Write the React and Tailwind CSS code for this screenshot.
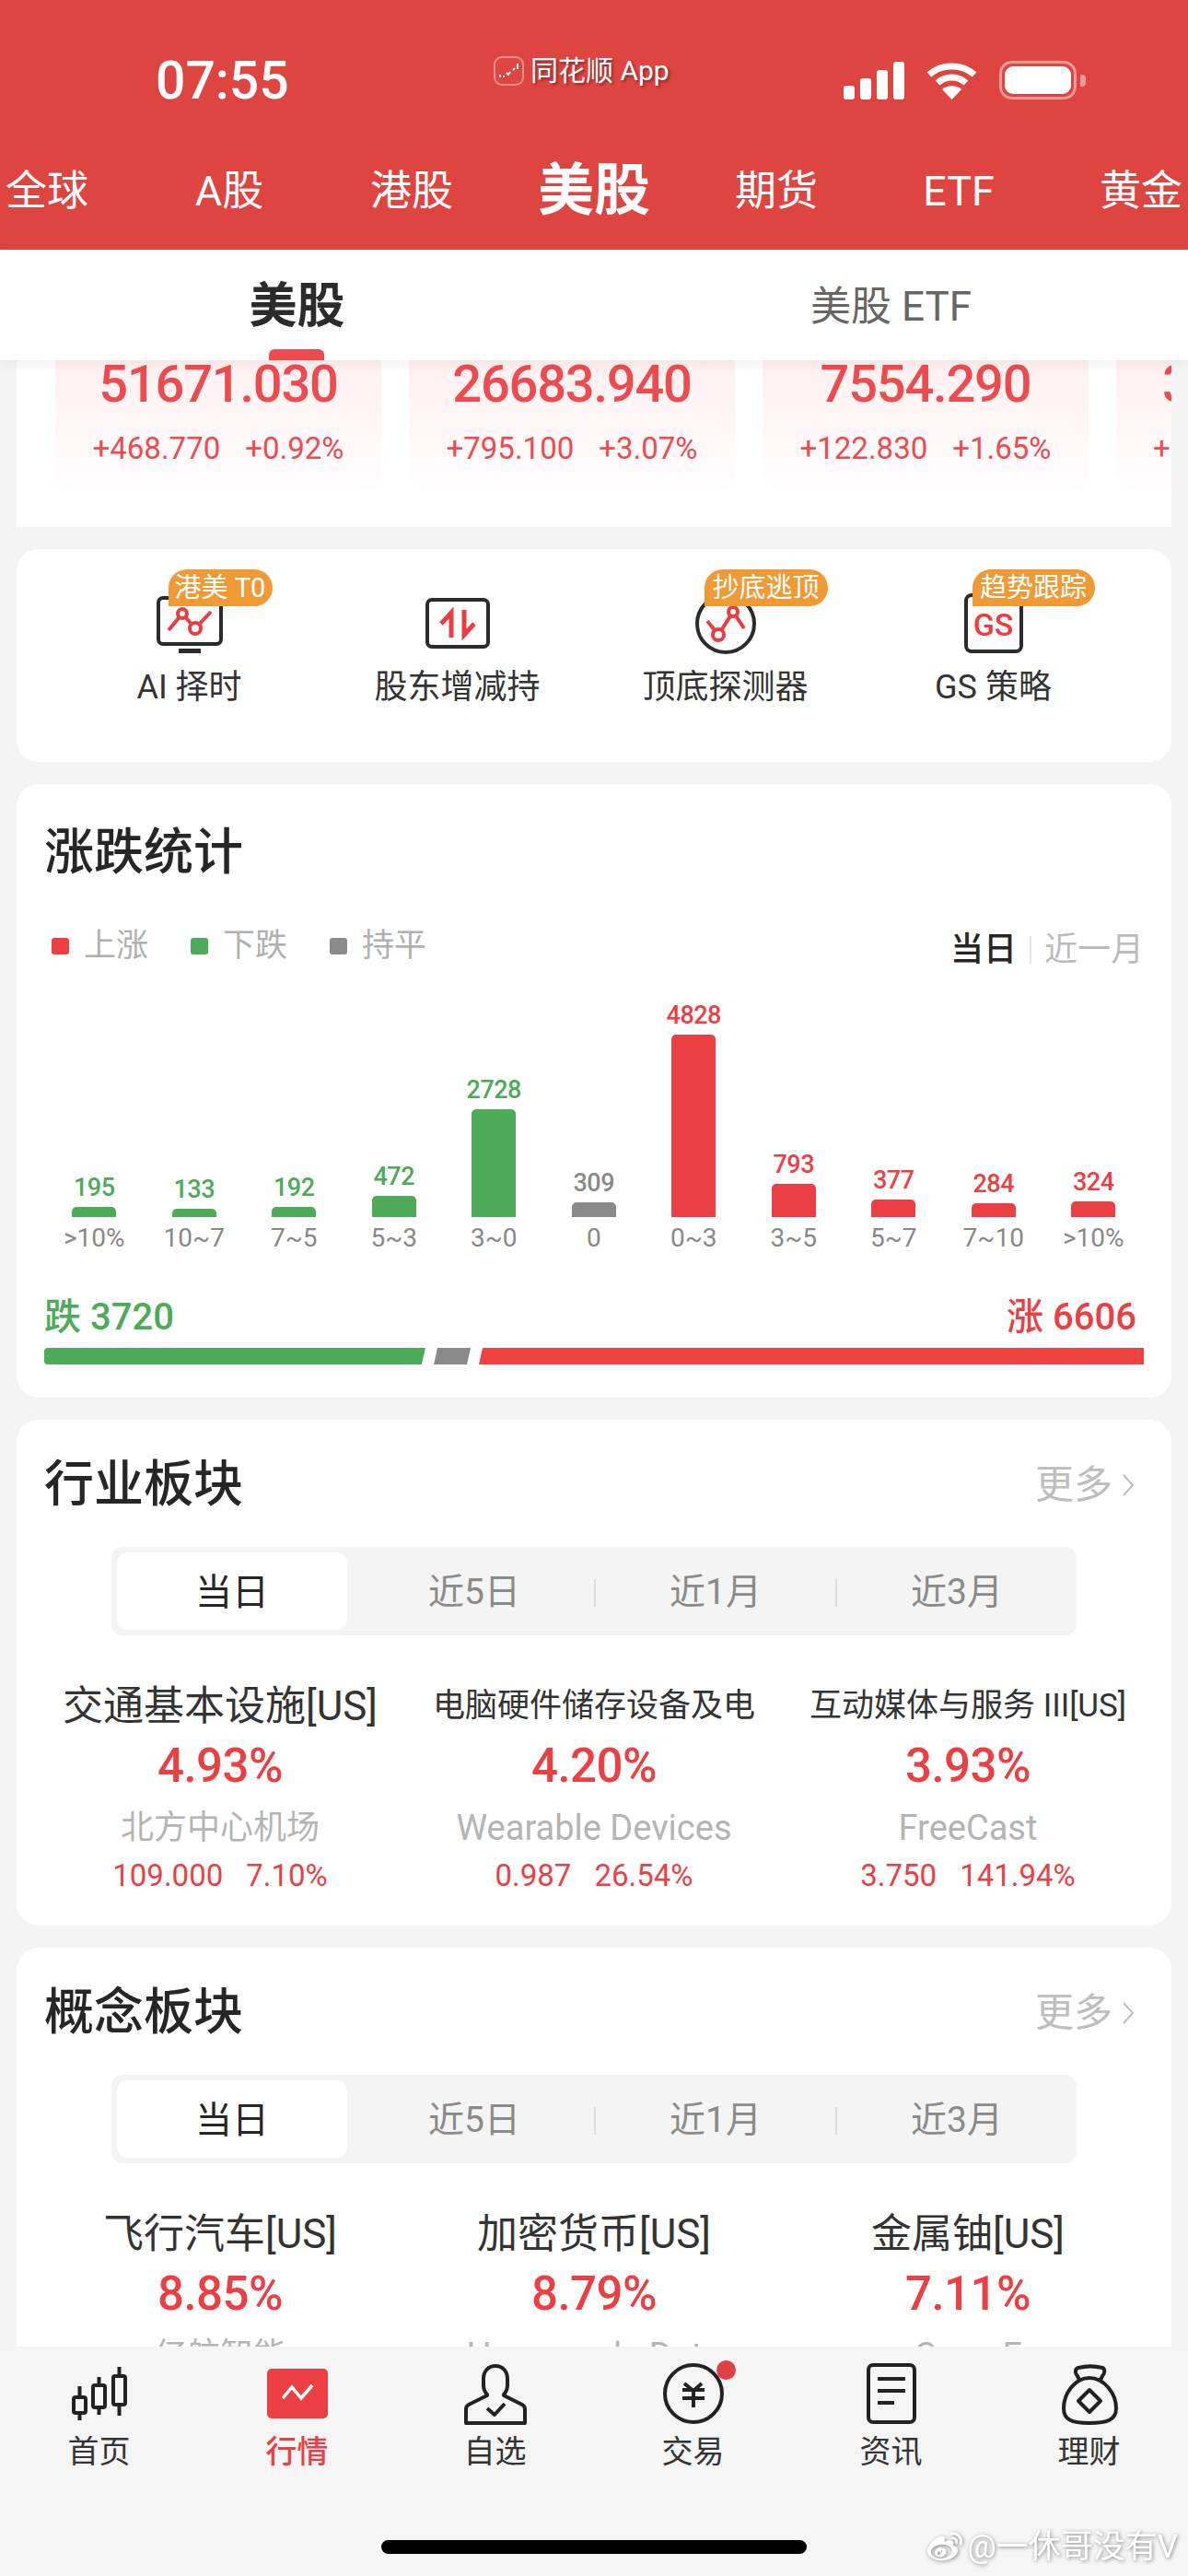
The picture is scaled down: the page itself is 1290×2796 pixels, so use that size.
import { FaWeibo } from 'react-icons/fa';

const navTabs = ['全球', 'A股', '港股', '美股', '期货', 'ETF', '黄金'];

const quotes = [
  { value: '51671.030', change: '+468.770', pct: '+0.92%' },
  { value: '26683.940', change: '+795.100', pct: '+3.07%' },
  { value: '7554.290', change: '+122.830', pct: '+1.65%' },
];

const bars = [
  { value: 195, label: '>10%', height: 11, tone: 'green' },
  { value: 133, label: '10~7', height: 9, tone: 'green' },
  { value: 192, label: '7~5', height: 11, tone: 'green' },
  { value: 472, label: '5~3', height: 23, tone: 'green' },
  { value: 2728, label: '3~0', height: 117, tone: 'green' },
  { value: 309, label: '0', height: 16, tone: 'gray' },
  { value: 4828, label: '0~3', height: 198, tone: 'red' },
  { value: 793, label: '3~5', height: 36, tone: 'red' },
  { value: 377, label: '5~7', height: 19, tone: 'red' },
  { value: 284, label: '7~10', height: 15, tone: 'red' },
  { value: 324, label: '>10%', height: 17, tone: 'red' },
];

const toneBg = { green: 'bg-[#4caa58]', gray: 'bg-[#8a8a8a]', red: 'bg-[#ec3f44]' };
const toneText = { green: 'text-[#4caa58]', gray: 'text-[#8a8a8a]', red: 'text-[#ec3f44]' };

const industry = [
  { name: '交通基本设施[US]', big: true, pct: '4.93%', stock: '北方中心机场', price: '109.000', change: '7.10%' },
  { name: '电脑硬件储存设备及电', pct: '4.20%', stock: 'Wearable Devices', latin: true, price: '0.987', change: '26.54%' },
  { name: '互动媒体与服务 III[US]', pct: '3.93%', stock: 'FreeCast', latin: true, price: '3.750', change: '141.94%' },
];

const concept = [
  { name: '飞行汽车[US]', big: true, pct: '8.85%', stock: '亿航智能' },
  { name: '加密货币[US]', big: true, pct: '8.79%', stock: 'Hyperscale Data', latin: true },
  { name: '金属铀[US]', big: true, pct: '7.11%', stock: 'Cosa F', latin: true },
];

const RED = '#ea3d43';
const INK = '#2b2b2b';

const StatusBar = () => (
  <div className="flex items-center h-[54px] mt-[60px] text-white">
    <span className="ml-[169px] w-[147px] text-[57px] leading-none font-medium">07:55</span>
    <div className="ml-[220px] flex items-center gap-[7px] -mt-[20px]">
      <span className="flex items-center justify-center w-[33px] h-[32px] rounded-[9px] border-2 border-white/40">
        <svg viewBox="0 0 24 24" className="w-[24px] h-[24px]" fill="none" stroke="#fff" strokeWidth="2">
          <path d="M2 19v-3M6 19v-2M9 14l2 2 2-3M16 11l2-2M21 10V4" />
        </svg>
      </span>
      <span className="w-[152px] text-[30px] leading-none whitespace-nowrap [text-shadow:2px_2px_3px_rgba(0,0,0,0.4)]">同花顺 App</span>
    </div>
    <div className="ml-[188px] flex items-end gap-[6px] h-[41px]">
      <span className="w-[12px] h-[15px] rounded-[3px] bg-white" />
      <span className="w-[12px] h-[23px] rounded-[3px] bg-white" />
      <span className="w-[12px] h-[32px] rounded-[3px] bg-white" />
      <span className="w-[12px] h-[41px] rounded-[3px] bg-white" />
    </div>
    <svg viewBox="0 0 57 41" className="ml-[23px] w-[57px] h-[41px]" fill="none" stroke="#fff" strokeWidth="7">
      <path d="M4 14C17 2 40 2 53 14" />
      <path d="M13 23C22 15 35 15 44 23" />
      <path d="M28.5 41L18 30C24 25 33 25 39 30Z" fill="#fff" stroke="none" />
    </svg>
    <div className="ml-[23px] flex items-center gap-[4px]">
      <div className="w-[84px] h-[42px] rounded-[14px] border-[3px] border-white/45 p-[3px]">
        <div className="w-full h-full rounded-[9px] bg-white" />
      </div>
      <span className="w-[6px] h-[13px] rounded-r-[4px] bg-white/45" />
    </div>
  </div>
);

const NavTabs = () => (
  <div className="flex justify-center items-center h-[100px] mt-[43px] text-white">
    {navTabs.map((tab) => (
      <span
        key={tab}
        className={`shrink-0 w-[198px] text-center whitespace-nowrap leading-none ${
          tab === '美股' ? 'text-[61px] font-bold' : 'text-[45px]'
        }`}
      >
        {tab}
      </span>
    ))}
  </div>
);

const QuoteCard = ({ quote }) => (
  <div className="shrink-0 w-[354px] h-[144px] pt-[2px] rounded-b-[24px] bg-linear-to-b from-[#fff0f0] to-[#fffdfe] flex flex-col items-center text-[#ee4b50]">
    <span className="text-[56px] leading-[48px] font-medium tracking-[-1.2px]">{quote.value}</span>
    <div className="flex gap-[27px] mt-[26px] text-[33px] leading-[40px]">
      <span>{quote.change}</span>
      <span>{quote.pct}</span>
    </div>
  </div>
);

const MonitorIcon = () => (
  <svg viewBox="0 0 80 72" className="w-[80px] h-[72px]" fill="none" strokeWidth="4">
    <rect x="6" y="8" width="68" height="50" rx="5" stroke={INK} />
    <rect x="28" y="63" width="24" height="5" fill={INK} />
    <polyline points="17,43 32,25 46,41 63,23" stroke={RED} />
    <circle cx="32" cy="25" r="5" stroke={RED} fill="#fff" />
    <circle cx="46" cy="41" r="6" stroke={RED} fill="#fff" />
  </svg>
);

const HolderIcon = () => (
  <svg viewBox="0 0 80 72" className="w-[80px] h-[72px]" fill="none" strokeWidth="4">
    <rect x="7" y="10" width="66" height="51" rx="5" stroke={INK} />
    <polyline points="22,36 33,24 33,51" stroke={RED} strokeWidth="5" />
    <polyline points="47,21 47,48 58,36" stroke={RED} strokeWidth="5" />
  </svg>
);

const DetectorIcon = () => (
  <svg viewBox="0 0 80 72" className="w-[80px] h-[72px]" fill="none" strokeWidth="4">
    <circle cx="40" cy="36" r="31" stroke={INK} />
    <polyline points="20,33 32,48 48,23 60,41" stroke={RED} />
    <circle cx="32" cy="48" r="6" stroke={RED} fill="#fff" />
    <circle cx="48" cy="23" r="5" stroke={RED} fill="#fff" />
  </svg>
);

const StrategyIcon = () => (
  <div className="relative w-[80px] h-[72px]">
    <svg viewBox="0 0 80 72" className="w-[80px] h-[72px]" fill="none" strokeWidth="4">
      <rect x="10" y="5" width="60" height="61" rx="6" stroke={INK} />
    </svg>
    <span className="absolute left-0 right-0 top-[13px] text-center text-[34px] leading-[48px] font-medium text-[#ea3d43]">GS</span>
  </div>
);

const tools = [
  { label: 'AI 择时', badge: '港美 T0', badgeWidth: 'w-[113px]', Icon: MonitorIcon },
  { label: '股东增减持', Icon: HolderIcon },
  { label: '顶底探测器', badge: '抄底逃顶', badgeWidth: 'w-[134px]', Icon: DetectorIcon },
  { label: 'GS 策略', badge: '趋势跟踪', badgeWidth: 'w-[133px]', Icon: StrategyIcon },
];

const ToolGrid = () => (
  <div className="mx-[18px] h-[231px] shrink-0 rounded-[24px] bg-white pt-[45px] pl-[42px] flex">
    {tools.map(({ label, badge, badgeWidth, Icon }) => (
      <div key={label} className="w-[291px] flex flex-col items-center">
        <div className="relative w-[80px] h-[72px]">
          <Icon />
          {badge && (
            <span
              className={`absolute left-[17px] -top-[23px] h-[40px] ${badgeWidth} rounded-t-[20px] rounded-br-[20px] bg-[#f09a36] text-white text-[29px] leading-[40px] text-center whitespace-nowrap`}
            >
              {badge}
            </span>
          )}
        </div>
        <span className="mt-[13px] text-[36px] leading-[40px] text-[#333]">{label}</span>
      </div>
    ))}
  </div>
);

const Legend = ({ tone, children }) => (
  <div className="flex items-center gap-[16px]">
    <span className={`w-[19px] h-[18px] rounded-[3px] ${toneBg[tone]}`} />
    <span className="text-[35px] leading-[40px] text-[#b0b0b0]">{children}</span>
  </div>
);

const StatsCard = () => (
  <div className="mx-[18px] shrink-0 rounded-[24px] bg-white px-[30px] pt-[45px] pb-[36px]">
    <h2 className="text-[54px] leading-[60px] font-medium text-[#262626]">涨跌统计</h2>
    <div className="flex items-center justify-between mt-[51px] pl-[8px] h-[40px]">
      <div className="flex items-center gap-[46px]">
        <Legend tone="red">上涨</Legend>
        <Legend tone="green">下跌</Legend>
        <Legend tone="gray">持平</Legend>
      </div>
      <div className="flex items-center mt-[8px] text-[36px] leading-[40px]">
        <span className="font-medium text-[#262626]">当日</span>
        <span className="w-[2px] h-[30px] mx-[14px] bg-[#e4e4e4]" />
        <span className="text-[#bbb]">近一月</span>
      </div>
    </div>
    <div className="grid grid-cols-[repeat(11,108.5px)] h-[276px] mt-[38px]">
      {bars.map((bar, index) => (
        <div key={index} className="flex flex-col items-center justify-end">
          <span className={`text-[27px] leading-[30px] mb-[6px] font-medium tracking-[-0.5px] ${toneText[bar.tone]}`}>{bar.value}</span>
          <div className={`w-[48px] rounded-t-[5px] ${toneBg[bar.tone]}`} style={{ height: bar.height }} />
          <span className="mt-[6px] text-[28px] leading-[34px] text-[#888]">{bar.label}</span>
        </div>
      ))}
    </div>
    <div className="flex justify-between items-center mt-[47px] h-[44px] text-[40px] font-medium">
      <span className="text-[#4caa58]">跌 3720</span>
      <span className="text-[#ec3f44] mr-[8px]">涨 6606</span>
    </div>
    <div className="flex gap-[9px] h-[18px] mt-[11px]">
      <div className="w-[414px] rounded-l-[4px] bg-[#4caa58] [clip-path:polygon(0_0,100%_0,99%_100%,0_100%)]" />
      <div className="w-[40px] bg-[#8a8a8a] [clip-path:polygon(10%_0,100%_0,90%_100%,0_100%)]" />
      <div className="w-[722px] bg-[#ec4340] [clip-path:polygon(4px_0,100%_0,100%_100%,0_100%)]" />
    </div>
  </div>
);

const SectorCard = ({ title, items }) => (
  <div className="mx-[18px] shrink-0 rounded-[24px] bg-white pt-[41px] pb-[34px]">
    <div className="flex items-center justify-between pl-[30px] pr-[40px]">
      <h2 className="text-[54px] leading-[60px] font-medium text-[#262626]">{title}</h2>
      <div className="flex items-center gap-[10px] text-[#bdbdbd]">
        <span className="text-[42px] leading-[44px]">更多</span>
        <svg viewBox="0 0 14 26" className="w-[14px] h-[26px]" fill="none" stroke="#bdbdbd" strokeWidth="2">
          <polyline points="2,2 12,13 2,24" />
        </svg>
      </div>
    </div>
    <div className="flex items-center h-[96px] mt-[37px] mx-[103px] pl-[6px] py-[6px] rounded-[12px] bg-[#f4f4f4] text-[39px] text-[#8a8a8a]">
      <div className="w-[250px] h-full pt-[3px] rounded-[12px] bg-white flex items-center justify-center text-[40px] text-[#262626]">当日</div>
      <div className="flex-1 ml-[8px] pt-[3px] flex items-center">
        <span className="flex-1 text-center">近5日</span>
        <span className="w-[2px] h-[30px] bg-[#dedede]" />
        <span className="flex-1 text-center">近1月</span>
        <span className="w-[2px] h-[30px] bg-[#dedede]" />
        <span className="flex-1 text-center">近3月</span>
      </div>
    </div>
    <div className="grid grid-cols-3 mt-[52px] mx-[18px]">
      {items.map((item) => (
        <div key={item.name} className="flex flex-col items-center">
          <span className={`h-[50px] leading-[50px] whitespace-nowrap text-[#333] ${item.big ? 'text-[44px]' : 'text-[35px]'}`}>{item.name}</span>
          <span className="mt-[10px] text-[51px] leading-[60px] font-medium tracking-[-0.5px] text-[#ec3f44]">{item.pct}</span>
          <span className={`mt-[15px] leading-[44px] whitespace-nowrap text-[#b4b4b4] ${item.latin ? 'text-[38px]' : 'text-[36px]'}`}>{item.stock}</span>
          {item.price && (
            <div className="flex gap-[25px] mt-[10px] text-[33px] leading-[40px] text-[#ec3f44]">
              <span>{item.price}</span>
              <span>{item.change}</span>
            </div>
          )}
        </div>
      ))}
    </div>
  </div>
);

const iconStroke = { fill: 'none', stroke: '#222', strokeWidth: 4 };

const tabBar = [
  {
    label: '首页',
    icon: (
      <g {...iconStroke}>
        <rect x="8" y="38" width="13" height="17" rx="2" />
        <path d="M14.5 26v12M14.5 55v8" />
        <rect x="29" y="25" width="13" height="24" rx="2" />
        <path d="M35.5 16v9M35.5 49v8" />
        <rect x="51" y="15" width="13" height="31" rx="2" />
        <path d="M57.5 5v10M57.5 46v12" />
      </g>
    ),
  },
  {
    label: '行情',
    active: true,
    icon: (
      <g>
        <rect x="3" y="7" width="66" height="54" rx="5" fill="#ec3f44" />
        <polyline points="20,39 30,27 40,39 52,25" fill="none" stroke="#fff" strokeWidth="3.5" />
      </g>
    ),
  },
  {
    label: '自选',
    icon: (
      <g {...iconStroke} strokeLinejoin="round">
        <path d="M36 4c-8 0-13 6-13 14v7c0 5 2 8 4 10v1L7 46c-2 1-3 3-3 5v15h64V51c0-2-1-4-3-5L45 36v-1c2-2 4-5 4-10v-7c0-8-5-14-13-14z" />
        <polyline points="27,50 35,57 46,45" />
      </g>
    ),
  },
  {
    label: '交易',
    dot: true,
    icon: (
      <g {...iconStroke}>
        <circle cx="36" cy="34" r="31" />
        <path d="M26 23l10 8 9-8M24 30h24M24 39h24M36 30v19" />
      </g>
    ),
  },
  {
    label: '资讯',
    icon: (
      <g {...iconStroke}>
        <rect x="11" y="3" width="50" height="62" rx="5" />
        <path d="M21 18h30M21 31h30M21 44h18" />
      </g>
    ),
  },
  {
    label: '理财',
    icon: (
      <g {...iconStroke} strokeLinejoin="round">
        <path d="M24 6c8-2 18-2 26 0 3 1 3 6 0 9l-2 4H25l-2-4c-3-3-3-8 1-9z" />
        <path d="M36 17c-16 0-28 17-28 33 0 12 8 16 28 16s29-4 29-16c0-16-13-33-29-33z" fill="#f5f5f5" />
        <polygon points="36,30 48,42 36,54 24,42" />
      </g>
    ),
  },
];

const BottomBar = () => (
  <div className="relative h-[249px] shrink-0 bg-[#f5f5f5]">
    <div className="grid grid-cols-6 pt-[17px]">
      {tabBar.map((tab) => (
        <div key={tab.label} className="flex flex-col items-center">
          <div className="relative w-[72px] h-[70px]">
            <svg viewBox="0 0 72 70" className="w-[72px] h-[70px]">{tab.icon}</svg>
            {tab.dot && <span className="absolute left-[61px] -top-[2px] w-[21px] h-[21px] rounded-full bg-[#df4044]" />}
          </div>
          <span className={`mt-[7px] text-[34px] leading-[40px] ${tab.active ? 'font-medium text-[#ec3f44]' : 'text-[#333]'}`}>{tab.label}</span>
        </div>
      ))}
    </div>
    <div className="absolute left-[414px] top-[210px] w-[462px] h-[15px] rounded-full bg-black" />
    <div className="absolute right-[11px] top-[198px] flex items-center gap-[2px] text-white [filter:drop-shadow(1px_1px_2px_rgba(0,0,0,0.45))]">
      <FaWeibo className="w-[44px] h-[38px]" />
      <span className="text-[35px] leading-[40px] whitespace-nowrap">@一休哥没有V</span>
    </div>
  </div>
);

const App = () => {
  return (
    <div className="w-[1290px] h-[2796px] overflow-hidden flex flex-col bg-[#f4f4f4] font-['Roboto','Noto_Sans_CJK_SC',sans-serif]">
      {/* Red header */}
      <div className="h-[271px] shrink-0 overflow-hidden bg-[#de4541]">
        <StatusBar />
        <NavTabs />
      </div>

      {/* Sub tabs */}
      <div className="relative z-10 grid grid-cols-2 h-[120px] shrink-0 bg-white shadow-[0_4px_12px_rgba(0,0,0,0.06)]">
        <div className="relative flex justify-center pt-[34px]">
          <span className="text-[52px] leading-[56px] font-bold text-[#2b2b2b]">美股</span>
          <span className="absolute left-[292px] bottom-0 w-[60px] h-[12px] rounded-t-[6px] bg-[#ee4b50]" />
        </div>
        <div className="flex justify-center pt-[34px]">
          <span className="text-[44px] leading-[56px] text-[#666]">美股 ETF</span>
        </div>
      </div>

      {/* Scrolling content */}
      <div className="flex-1 min-h-0 overflow-hidden flex flex-col gap-[24px]">
        <div className="mx-[18px] h-[181px] shrink-0 overflow-hidden bg-white flex gap-[30px] pl-[42px]">
          {quotes.map((quote) => (
            <QuoteCard key={quote.value} quote={quote} />
          ))}
          <div className="shrink-0 w-[354px] h-[144px] pt-[2px] rounded-b-[24px] bg-linear-to-b from-[#fff0f0] to-[#fffdfe] text-[#ee4b50]">
            <div className="pl-[50px] text-[56px] leading-[48px] font-medium">3</div>
            <div className="pl-[40px] mt-[26px] text-[33px] leading-[40px]">+</div>
          </div>
        </div>
        <ToolGrid />
        <StatsCard />
        <SectorCard title="行业板块" items={industry} />
        <SectorCard title="概念板块" items={concept} />
      </div>

      <BottomBar />
    </div>
  );
};

export default App;
